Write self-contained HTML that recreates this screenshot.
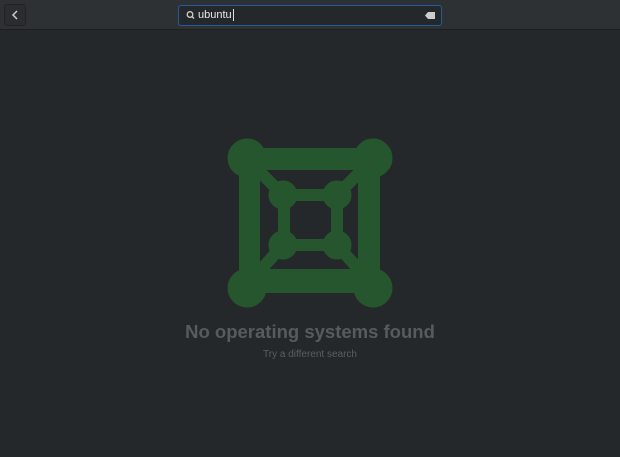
<!DOCTYPE html>
<html><head><style>
body{margin:0;width:620px;height:457px;background:#25282a;font-family:"Liberation Sans",sans-serif;overflow:hidden;position:relative}
.hdr{position:absolute;left:0;top:0;width:620px;height:29px;background:#2e3134;border-bottom:1px solid #1c1e1f}
.back{position:absolute;left:4px;top:4px;width:20px;height:20px;background:#2a2d30;border:1px solid #222;border-radius:3px}
.search{position:absolute;left:178px;top:5px;width:262px;height:19px;border:1px solid #215d9c;border-radius:3px;background:#25282a}
.search span{position:absolute;left:19px;top:3px;font-size:11px;color:#e8e8e8}
h1{position:absolute;left:0;width:620px;top:321px;margin:0;text-align:center;font-size:18.5px;font-weight:bold;color:#575b5f}
p{position:absolute;left:0;width:620px;top:349px;margin:0;text-align:center;font-size:10px;color:#5a5e62}
</style></head><body>
<div class="hdr">
<div class="back"><svg width="20" height="20"><path d="M12 6 L8 10 L12 14" stroke="#ccc" stroke-width="1.5" fill="none"/></svg></div>
<div class="search">
<svg width="19" height="19" style="position:absolute;left:3px;top:0"><circle cx="8" cy="8.5" r="2.8" stroke="#ccc" stroke-width="1.3" fill="none"/><path d="M10 10.5 L12 12.5" stroke="#ccc" stroke-width="1.4"/></svg>
<span>ubuntu<span style="position:static;border-left:1px solid #ddd;margin-left:1px"></span></span>
<svg width="12" height="10" style="position:absolute;right:4px;top:5px"><path d="M3 1 H10 V8 H3 L0 4.5Z" fill="#ccc"/></svg>
</div>
</div>
<svg width="620" height="457" style="position:absolute;left:0;top:0">
<g fill="#26562d" stroke="#26562d">
<circle cx="247" cy="158" r="19"/><circle cx="373" cy="158" r="19"/>
<circle cx="247" cy="288" r="19"/><circle cx="373" cy="288" r="19"/>
<rect x="247" y="148" width="126" height="22" stroke="none"/>
<rect x="247" y="269" width="126" height="24" stroke="none"/>
<rect x="239" y="158" width="21" height="130" stroke="none"/>
<rect x="358" y="158" width="22" height="130" stroke="none"/>
<circle cx="283" cy="195" r="14"/><circle cx="337" cy="195" r="14"/>
<circle cx="283" cy="245" r="14"/><circle cx="337" cy="245" r="14"/>
<rect x="278" y="195" width="12" height="50" stroke="none"/>
<rect x="331" y="195" width="12" height="50" stroke="none"/>
<rect x="283" y="189" width="54" height="12" stroke="none"/>
<rect x="283" y="239" width="54" height="12" stroke="none"/>
<path d="M250 162 L283 195 M370 162 L337 195 M250 282 L283 245 M370 282 L337 245" stroke-width="12" fill="none"/>
</g>
</svg>
<h1>No operating systems found</h1>
<p>Try a different search</p>
</body></html>
